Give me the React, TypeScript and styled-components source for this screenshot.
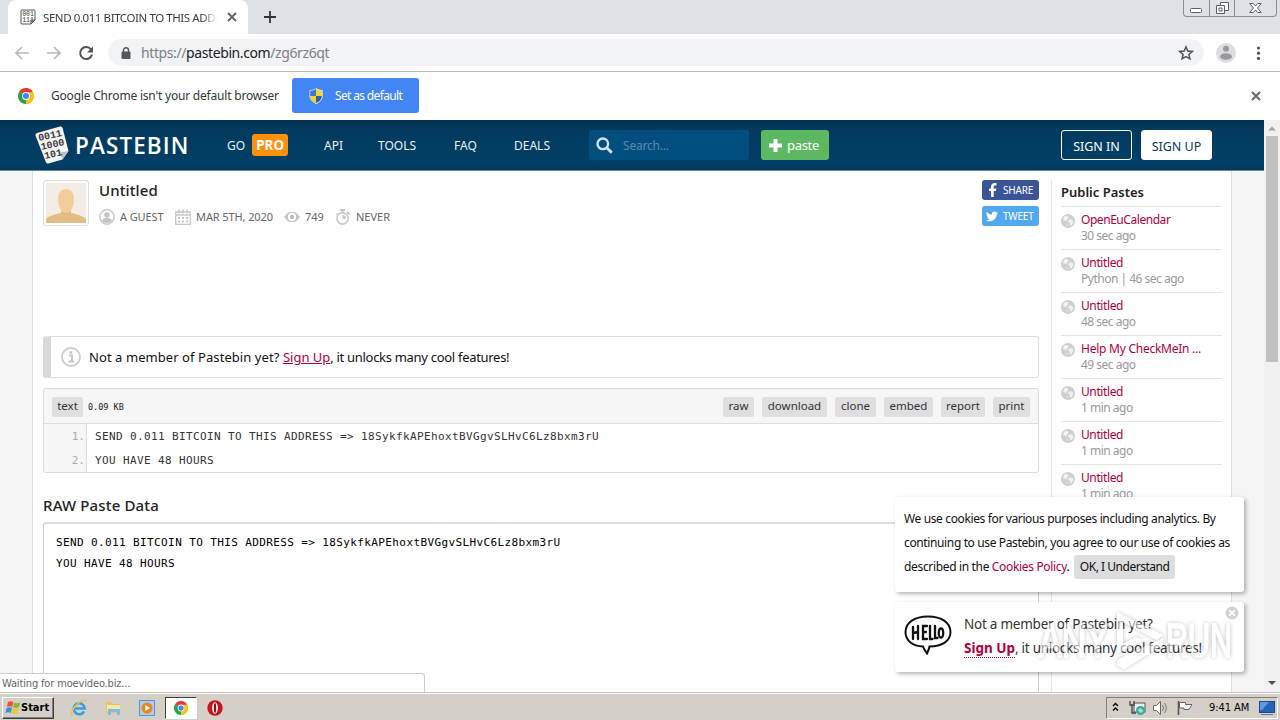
import React from "react";
import styled, { createGlobalStyle } from "styled-components";

const GlobalStyle = createGlobalStyle`
  * {
    box-sizing: border-box;
  }

  body {
    margin: 0;
    overflow: hidden;
    font-family: "Noto Sans", "Open Sans", sans-serif;
    font-size: 12px;
    color: #222;
  }
`;

const Screen = styled.div`
  position: relative;
  display: flex;
  flex-direction: column;
  width: 1280px;
  height: 720px;
  overflow: hidden;
  background-color: #fff;
`;

const Text = styled.span<{ $ls?: number }>`
  white-space: pre;
  letter-spacing: ${({ $ls }) => $ls ?? 0}px;
`;

/* Browser chrome */

const TabStrip = styled.div`
  display: flex;
  align-items: flex-start;
  height: 34px;
  padding-left: 8px;
  background-color: #dee1e6;
`;

const Tab = styled.div`
  display: flex;
  align-items: center;
  width: 240px;
  height: 34px;
  padding: 0 10px 0 12px;
  border-radius: 8px 8px 0 0;
  background-color: #fff;

  & svg {
    flex: none;
  }
`;

const TabTitle = styled.div`
  width: 174px;
  margin: 0 10px 0 7px;
  overflow: hidden;
  font-size: 11.5px;
  color: #3c4043;
  mask-image: linear-gradient(to right, #000 92%, transparent);
`;

const NewTab = styled.div`
  margin: 10px 0 0 15px;
  height: 14px;

  & svg {
    display: block;
  }
`;

const WindowButtons = styled.div`
  display: flex;
  height: 17px;
  margin: 0 3px 0 auto;
  border: 1px solid #8b8e99;
  border-top: none;
  border-radius: 0 0 4px 4px;

  & div {
    display: flex;
    justify-content: center;
    width: 25px;
  }

  & div + div {
    border-left: 1px solid #8b8e99;
  }

  & div:last-child {
    width: 42px;
  }
`;

const Toolbar = styled.div`
  display: flex;
  align-items: center;
  height: 38px;
  padding: 0 13px;
  border-bottom: 1px solid #b9bbbd;

  & > svg {
    flex: none;
  }
`;

const AddressBar = styled.div`
  display: flex;
  align-items: center;
  width: 1096px;
  height: 27px;
  margin: 0 1px 0 12px;
  padding: 0 10px 0 13px;
  border-radius: 14px;
  background-color: #f1f3f4;

  & .url {
    margin: -1px auto 0 10px;
    font-size: 14px;
    color: #7d8185;
  }

  & b {
    font-weight: normal;
    color: #202124;
  }
`;

const InfoBar = styled.div`
  display: flex;
  align-items: center;
  height: 48px;
  padding: 0 19px 0 18px;
  color: #333639;

  & .message {
    width: 229px;
    margin: -2px 0 0 17px;
  }
`;

const DefaultButton = styled.div`
  display: flex;
  align-items: center;
  width: 127px;
  height: 35px;
  margin: -1px auto 0 12px;
  padding-left: 17px;
  gap: 12px;
  border-radius: 3px;
  background-color: #4285f4;
  color: #fff;
`;

/* Page */

const Viewport = styled.div`
  display: flex;
  height: 572px;
  overflow: hidden;
`;

const Page = styled.div`
  width: 1264px;
  background-color: #f5f5f5;
`;

const Header = styled.header`
  display: flex;
  align-items: center;
  height: 51px;
  padding: 0 0 0 34px;
  border-bottom: 1px solid #6088a5;
  background: linear-gradient(#02304f, #033a5e 15%, #023f66 85%, #02395c);
  color: #e8f1f7;

  & > svg {
    flex: none;
  }
`;

const Brand = styled.div`
  width: 152px;
  margin-left: 5px;
  font-family: "Open Sans", sans-serif;
  font-size: 22.5px;
  font-weight: 600;
  color: #fff;
`;

const Nav = styled.nav`
  display: flex;
  width: 362px;
  font-size: 12px;
`;

const NavItem = styled.div<{ $width: number }>`
  display: flex;
  align-items: center;
  width: ${({ $width }) => $width}px;
`;

const ProBadge = styled.span`
  width: 36px;
  height: 22px;
  margin-left: 7px;
  border-radius: 3px;
  background-color: #ff9008;
  color: #fff;
  font-size: 13.5px;
  font-weight: bold;
  line-height: 23px;
  text-align: center;
`;

const Search = styled.div`
  display: flex;
  align-items: center;
  width: 160px;
  height: 30px;
  padding-left: 7px;
  gap: 10px;
  border-radius: 3px;
  background-color: #024f7f;
  color: #5f88a4;
`;

const PasteButton = styled.div`
  display: flex;
  align-items: center;
  width: 68px;
  height: 30px;
  margin-left: 12px;
  padding-left: 8px;
  gap: 5px;
  border-radius: 3px;
  background-color: #5cb962;
  color: #fff;
  font-size: 13px;
`;

const AuthButton = styled.div<{ $filled?: boolean }>`
  width: 71px;
  height: 30px;
  margin-right: ${({ $filled }) => ($filled ? 52 : 9)}px;
  margin-left: ${({ $filled }) => ($filled ? 0 : "auto")};
  border: 1px solid #fff;
  border-radius: 3px;
  background-color: ${({ $filled }) => ($filled ? "#fff" : "transparent")};
  color: ${({ $filled }) => ($filled ? "#023b60" : "#fff")};
  font-size: 12.5px;
  line-height: 32px;
  text-align: center;
`;

const Content = styled.div`
  display: flex;
  width: 1200px;
  height: 521px;
  margin-left: 32px;
  padding: 9px 9px 0 10px;
  border: 1px solid #dedede;
  border-width: 0 1px;
  background-color: #fff;
`;

const Main = styled.main`
  width: 996px;
  margin-right: 12px;
`;

const PasteInfo = styled.div`
  display: flex;
  height: 156px;
`;

const Avatar = styled.div`
  width: 46px;
  height: 46px;
  padding: 2px;
  border: 1px solid #ddd;
  border-radius: 3px;

  & svg {
    display: block;
  }
`;

const Details = styled.div`
  width: 870px;
  padding-left: 10px;

  & h1 {
    height: 23px;
    margin: 0 0 4px;
    font-size: 15px;
    font-weight: 500;
    line-height: 21px;
    letter-spacing: 0.1px;
  }
`;

const Meta = styled.div`
  display: flex;
  align-items: center;
  height: 20px;
  font-size: 11px;
  color: #666;

  & svg {
    flex: none;
    margin-right: 5px;
  }

  & span {
    margin-top: -2px;
  }
`;

const MetaItem = styled.div<{ $width: number }>`
  display: flex;
  align-items: center;
  width: ${({ $width }) => $width}px;
`;

const Social = styled.div`
  margin-left: auto;
`;

const SocialButton = styled.div<{ $color: string }>`
  display: flex;
  align-items: center;
  width: 57px;
  height: 20px;
  margin-bottom: 6px;
  padding-left: 4px;
  gap: 5px;
  border-radius: 3px;
  background-color: ${({ $color }) => $color};
  color: #fff;
  font-size: 10px;
`;

const Notice = styled.div`
  display: flex;
  align-items: center;
  height: 42px;
  padding-left: 10px;
  gap: 8px;
  border: 1px solid #ddd;
  border-left: 8px solid #d9d9d9;
  border-radius: 3px;
  font-size: 13px;
  color: #111;
`;

const Link = styled.span`
  color: #b00040;
`;

const CodeBox = styled.div`
  height: 85px;
  margin-top: 10px;
  border: 1px solid #dcdcdc;
  border-radius: 3px;
  overflow: hidden;
`;

const CodeBar = styled.div`
  display: flex;
  align-items: center;
  height: 35px;
  padding: 2px 8px 0;
  gap: 8px;
  border-bottom: 1px solid #dcdcdc;
  background-color: #f6f6f6;

  & .size {
    margin: 0 auto 0 -3px;
    font-family: "DejaVu Sans Mono", monospace;
    font-size: 8.5px;
  }
`;

const SmallButton = styled.span<{ $width: number }>`
  width: ${({ $width }) => $width}px;
  height: 20px;
  border-radius: 2px;
  background-color: #dfdfdf;
  color: #333;
  font-size: 11.5px;
  line-height: 18px;
  text-align: center;
  white-space: nowrap;
`;

const CodeLine = styled.div`
  display: flex;
  height: 24px;
  font-family: "DejaVu Sans Mono", monospace;
  font-size: 11px;
  line-height: 26px;
  color: #333;

  & .num {
    width: 43px;
    margin-right: 8px;
    padding-right: 1px;
    border-right: 1px solid #dcdcdc;
    background-color: #f6f6f6;
    color: #aaa;
    text-align: right;
  }
`;

const RawTitle = styled.h2`
  height: 49px;
  margin: 0;
  padding-top: 22px;
  font-size: 15px;
  font-weight: 500;
  line-height: 21px;
  letter-spacing: 0.15px;
`;

const RawBox = styled.div`
  height: 180px;
  padding: 8px 12px;
  border: 1px solid #ccc;
  border-top: 2px solid #ddd;
  border-radius: 3px;
  font-family: "DejaVu Sans Mono", monospace;
  font-size: 11px;
  line-height: 21px;
  color: #000;
`;

const Sidebar = styled.aside`
  width: 171px;
  padding-left: 9px;
  border-left: 1px solid #e4e4e4;

  & h3 {
    height: 27px;
    margin: 0;
    border-bottom: 1px solid #e3e3e3;
    font-size: 13px;
    font-weight: 600;
    line-height: 24px;
  }
`;

const PasteItem = styled.div`
  display: flex;
  width: 161px;
  height: 43px;
  padding-top: 5px;
  gap: 6px;
  border-bottom: 1px solid #e3e3e3;
  line-height: 16px;

  & svg {
    margin-top: 2px;
  }

  & .when {
    color: #999;
  }
`;

const Scrollbar = styled.div`
  display: flex;
  flex-direction: column;
  align-items: center;
  width: 16px;
  background-color: #f1f1f1;

  & .thumb {
    width: 12px;
    height: 226px;
    margin: 1px 0 auto;
    background-color: #c1c1c1;
  }
`;

/* Overlays */

const Popup = styled.div<{ $top: number; $height: number }>`
  position: absolute;
  top: ${({ $top }) => $top}px;
  left: 895px;
  display: flex;
  width: 349px;
  height: ${({ $height }) => $height}px;
  padding: 10px 9px;
  border-radius: 3px;
  background-color: #fff;
  box-shadow: 2px 2px 4px rgba(0, 0, 0, 0.3);
  line-height: 24px;
  color: #111;
`;

const OkButton = styled.span`
  display: inline-block;
  width: 101px;
  height: 24px;
  margin-left: 2px;
  border-radius: 3px;
  background-color: #ddd;
  line-height: 23px;
  text-align: center;
`;

const Hello = styled.div`
  width: 60px;
  padding-top: 3px;
`;

const NoteText = styled.div`
  font-size: 13.5px;
  color: #333;

  & .signup {
    border-bottom: 1px dotted #b00040;
    font-weight: bold;
  }
`;

const Close = styled.div`
  position: absolute;
  top: 4px;
  right: 5px;
  height: 14px;

  & svg {
    display: block;
  }
`;

const Watermark = styled.svg`
  position: absolute;
  top: 602px;
  left: 1030px;
`;

const StatusBubble = styled.div`
  position: absolute;
  top: 673px;
  left: 0;
  width: 425px;
  height: 19px;
  padding-left: 2px;
  border: 1px solid #ccc;
  border-width: 1px 1px 0 0;
  border-radius: 0 4px 0 0;
  background-color: #fff;
  font-family: "DejaVu Sans Condensed", "DejaVu Sans", sans-serif;
  font-size: 11px;
  line-height: 19px;
  color: #666;
`;

/* Taskbar */

const Taskbar = styled.footer`
  display: flex;
  align-items: center;
  height: 28px;
  border-top: 1px solid #c6c2ba;
  box-shadow: inset 0 1px 0 #fff;
  background-color: #d4d0c8;
  font-family: "DejaVu Sans Condensed", "DejaVu Sans", sans-serif;
  font-size: 11px;
  color: #000;
`;

const StartButton = styled.div`
  display: flex;
  align-items: center;
  width: 52px;
  height: 22px;
  margin: 2px 14px 0 2px;
  padding-left: 2px;
  border: 1px solid;
  border-color: #fff #404040 #404040 #fff;
  box-shadow: inset -1px -1px 0 #808080;
  font-weight: bold;

  & svg {
    flex: none;
  }
`;

const TaskItem = styled.div<{ $active?: boolean }>`
  display: flex;
  align-items: center;
  justify-content: center;
  width: ${({ $active }) => ($active ? 32 : 22)}px;
  height: 22px;
  margin: 2px ${({ $active }) => ($active ? 7 : 12)}px 0 0;
  border: ${({ $active }) => ($active ? "1px solid" : "none")};
  border-color: #404040 #fff #fff #404040;
  background-color: ${({ $active }) => ($active ? "#fff" : "transparent")};

  &:nth-child(4) {
    margin-right: 7px;
  }
`;

const Tray = styled.div`
  display: flex;
  align-items: center;
  width: 172px;
  height: 22px;
  margin: 2px 2px 0 auto;
  padding-left: 5px;
  border: 1px solid;
  border-color: #808080 #fff #fff #808080;

  & svg {
    flex: none;
  }

  & .clock {
    margin: 0 10px 0 17px;
  }
`;

const CloseIcon = ({ color = "#5f6368", size = 10 }) => (
  <svg width={size} height={size} viewBox="0 0 10 10">
    <path d="M1 1l8 8M9 1L1 9" stroke={color} strokeWidth="1.9" />
  </svg>
);

const ChromeIcon = ({ size = 16 }) => (
  <svg width={size} height={size} viewBox="0 0 16 16">
    <path d="M8 8L1.07 4A8 8 0 0 1 14.93 4z" fill="#dd3b2e" />
    <path d="M8 8l6.93-4A8 8 0 0 1 8 16l-1-1z" fill="#fbc116" />
    <path d="M8 8l0 8A8 8 0 0 1 1.07 4z" fill="#27a34a" />
    <path d="M8 4.2h7A8 8 0 0 1 8 16l3.4-6z" fill="#fbc116" />
    <circle cx="8" cy="8" r="3.9" fill="#fff" />
    <circle cx="8" cy="8" r="3" fill="#4285f4" />
  </svg>
);

const ShieldIcon = () => (
  <svg width="14" height="16" viewBox="0 0 14 16">
    <path d="M7 0C5 1.5 3 2 .5 2v6c0 4 3 6.5 6.5 8z" fill="#3c78c8" />
    <path d="M7 0c2 1.5 4 2 6.5 2v6c0 4-3 6.5-6.5 8z" fill="#f6d32d" />
    <path d="M.8 8H7v7.3C3.8 14 1.2 11.5.8 8z" fill="#f6d32d" />
    <path d="M13.2 8H7v7.3c3.2-1.3 5.8-3.8 6.2-7.3z" fill="#2c62b5" />
    <path
      d="M7 .6C5 2 3 2.4.8 2.4v5.8c0 3.5 2.7 6 6.2 7.3 3.5-1.3 6.2-3.8 6.2-7.3V2.4C11 2.4 9 2 7 .6z"
      fill="none"
      stroke="#dfe6ee"
      strokeWidth=".8"
    />
  </svg>
);

const FaviconIcon = () => (
  <svg width="16" height="16" viewBox="0 0 16 16">
    <path
      d="M2 1h12q1 0 1 1v9l-4 4H2q-1 0-1-1V2q0-1 1-1z"
      fill="#fff"
      stroke="#555"
    />
    <path d="M11 15v-4h4" fill="none" stroke="#555" />
    <g fontFamily="Liberation Mono, monospace" fontSize="6.5" fill="#333">
      <text x="2.2" y="7.2">001</text>
      <text x="2.2" y="13.2">111</text>
    </g>
  </svg>
);

const LogoIcon = () => (
  <svg width="36" height="42" viewBox="0 0 36 42">
    <path
      d="M3 9L26 2.500q2-.5 2.600 1.500L34.500 27l-6 8.500-14 4q-2 .4-2.700-1.500L1.500 11.500q-.4-2 1.500-2.500z"
      fill="#f4f4f4"
    />
    <path d="M34.500 27l-8.300 1.500 2.300 7z" fill="#b9c1c7" />
    <g
      fontFamily="Liberation Mono, monospace"
      fontSize="10"
      fontWeight="bold"
      fill="#3c3c3c"
    >
      <text transform="translate(5 17) rotate(-12)">0011</text>
      <text transform="translate(7.500 26) rotate(-12)">1000</text>
      <text transform="translate(11 35) rotate(-12)">101</text>
    </g>
  </svg>
);

const GlobeIcon = () => (
  <svg width="14" height="14" viewBox="0 0 14 14">
    <circle cx="7" cy="7" r="7" fill="#cfcfcf" />
    <path d="M3 2.500l3.500-.500 1 2-1.500 1.500-1 2-2-1.500-1 .5z" fill="#f4f4f4" />
    <path d="M9 5l2.500 1 1 2-2 3.500-1.500-.5-.5-2.500-2-1z" fill="#f0f0f0" />
    <path d="M5 9.500l2 1-.5 2z" fill="#e8e8e8" />
  </svg>
);

const AvatarIcon = () => (
  <svg width="40" height="40" viewBox="0 0 40 40">
    <rect width="40" height="40" fill="#f4ede6" />
    <path
      d="M12 16c0-6 3-10 8-10s8 4 8 10c0 4-1 8-3 11v5H15v-5c-2-3-3-7-3-11z"
      fill="#f2cd98"
    />
    <path d="M15 28c3 3 7 3 10 0v4H15z" fill="#e2b67c" />
    <path d="M0 40v-4c2-3 9-4.500 14-6 3 2 9 2 12 0 5 1.500 12 3 14 6v4z" fill="#e5bd87" />
  </svg>
);

const GuestIcon = () => (
  <svg width="16" height="16" viewBox="0 0 16 16">
    <circle cx="8" cy="8" r="7.200" fill="none" stroke="#c9c9c9" strokeWidth="1.500" />
    <circle cx="8" cy="6" r="2.700" fill="#c2c2c2" />
    <path d="M3 12c.5-2.500 3-3 5-3s4.500.5 5 3a7 7 0 0 1-10 0z" fill="#c2c2c2" />
  </svg>
);

const CalendarIcon = () => (
  <svg width="16" height="16" viewBox="0 0 16 16" fill="none" stroke="#c8c8c8">
    <path d="M.7 3h14.600v12.300H.7zM.7 6h14.600" strokeWidth="1.300" />
    <path d="M4 .5v4M8 .5v4M12 .5v4" strokeWidth="1.600" />
    <path d="M3 9h2M7 9h2M11 9h2M3 12.500h2M7 12.500h2M11 12.500h2" strokeWidth="2" />
  </svg>
);

const EyeIcon = () => (
  <svg width="16" height="16" viewBox="0 0 16 16">
    <path d="M0 8c4-7 12-7 16 0-4 7-12 7-16 0z" fill="#c6c6c6" />
    <circle cx="8" cy="8" r="4" fill="#fff" />
    <circle cx="8" cy="8" r="2.200" fill="#bdbdbd" />
  </svg>
);

const TimerIcon = () => (
  <svg width="16" height="16" viewBox="0 0 16 16" fill="none" stroke="#c8c8c8">
    <circle cx="7.500" cy="9.500" r="5.600" strokeWidth="1.600" />
    <path d="M5 1h5M7.500 1v3M12 3l2.500 2.500" strokeWidth="1.800" />
    <path d="M7.500 9.500V6a3.500 3.500 0 0 1 3.500 3.500z" fill="#c4c4c4" stroke="none" />
    <path d="M1.500 4.500l1 1" strokeWidth="1.400" />
  </svg>
);

const pastes = [
  { title: "OpenEuCalendar", when: "30 sec ago", ls: -0.45 },
  { title: "Untitled", when: "Python | 46 sec ago" },
  { title: "Untitled", when: "48 sec ago" },
  { title: "Help My CheckMeIn ...", when: "49 sec ago", ls: -0.25 },
  { title: "Untitled", when: "1 min ago" },
  { title: "Untitled", when: "1 min ago" },
  { title: "Untitled", when: "1 min ago" },
];

const actions = [
  { label: "raw", width: 31 },
  { label: "download", width: 65 },
  { label: "clone", width: 41 },
  { label: "embed", width: 49 },
  { label: "report", width: 44 },
  { label: "print", width: 37 },
];

const firstLine =
  "SEND 0.011 BITCOIN TO THIS ADDRESS => 18SykfkAPEhoxtBVGgvSLHvC6Lz8bxm3rU";
const secondLine = "YOU HAVE 48 HOURS";

const BrowserChrome = () => (
  <>
    <TabStrip>
      <Tab>
        <FaviconIcon />
        <TabTitle>
          <Text $ls={-0.42}>SEND 0.011 BITCOIN TO THIS ADDR</Text>
        </TabTitle>
        <CloseIcon />
      </Tab>
      <NewTab>
        <svg width="14" height="14" viewBox="0 0 14 14">
          <path d="M7 1v12M1 7h12" stroke="#303338" strokeWidth="1.800" />
        </svg>
      </NewTab>
      <WindowButtons>
        <div>
          <svg width="13" height="16" viewBox="0 0 13 16">
            <rect x=".5" y="8.500" width="11" height="4" rx="1" fill="#fff" stroke="#5a5d66" />
          </svg>
        </div>
        <div>
          <svg width="13" height="16" viewBox="0 0 13 16" fill="#fff" stroke="#5a5d66">
            <path d="M4.500 2.500h8v8h-8z" />
            <path d="M.5 5.500h8v8h-8zM3 8h3v3H3z" />
          </svg>
        </div>
        <div>
          <svg width="13" height="16" viewBox="0 0 13 16">
            <path
              d="M.8 3.500h3.400l2.300 2.600 2.300-2.600h3.400L8.500 8l3.700 4.500H8.800L6.500 9.900l-2.300 2.600H.8L4.500 8z"
              fill="#fff"
              stroke="#5a5d66"
            />
          </svg>
        </div>
      </WindowButtons>
    </TabStrip>
    <Toolbar>
      <svg width="83" height="18" viewBox="0 0 83 18" fill="none" strokeWidth="1.700">
        <path d="M16 9H3M9 3L3 9l6 6" stroke="#b5b7ba" />
        <path d="M34 9h13M41 3l6 6-6 6" stroke="#b5b7ba" />
        <path d="M78 5.500A6 6 0 1 0 79 10.500" stroke="#505357" strokeWidth="2" />
        <path d="M80 2.500v6h-6z" fill="#505357" />
      </svg>
      <AddressBar>
        <svg width="10" height="12" viewBox="0 0 10 12">
          <path d="M2.500 5V3.300a2.500 2.500 0 0 1 5 0V5" fill="none" stroke="#55585c" strokeWidth="1.400" />
          <rect x="0.500" y="4.500" width="9" height="7.500" rx="1" fill="#55585c" />
        </svg>
        <Text className="url" $ls={-0.4}>
          https://<b>pastebin.com</b>/zg6rz6qt
        </Text>
        <svg width="16" height="16" viewBox="0 0 16 16">
          <path
            d="M8 1.800l1.800 4.200 4.500.4-3.400 3 1 4.400L8 11.500l-3.900 2.300 1-4.400-3.400-3 4.500-.4z"
            fill="none"
            stroke="#505357"
            strokeWidth="1.500"
          />
        </svg>
      </AddressBar>
      <svg width="62" height="20" viewBox="0 0 62 20">
        <circle cx="21" cy="10" r="10" fill="#dcdddf" />
        <circle cx="21" cy="5.800" r="3" fill="#97999c" />
        <ellipse cx="21" cy="13.500" rx="6" ry="3.200" fill="#97999c" />
        <circle cx="53.500" cy="5" r="1.600" fill="#505357" />
        <circle cx="53.500" cy="10.200" r="1.600" fill="#505357" />
        <circle cx="53.500" cy="15.400" r="1.600" fill="#505357" />
      </svg>
    </Toolbar>
    <InfoBar>
      <ChromeIcon />
      <Text $ls={-0.2} className="message">
        Google Chrome isn't your default browser
      </Text>
      <DefaultButton>
        <ShieldIcon />
        <Text $ls={-0.65}>Set as default</Text>
      </DefaultButton>
      <CloseIcon />
    </InfoBar>
  </>
);

const SiteHeader = () => (
  <Header>
    <LogoIcon />
    <Brand>
      <Text $ls={1.1}>PASTEBIN</Text>
    </Brand>
    <Nav>
      <NavItem $width={97}>
        <Text>GO</Text>
        <ProBadge>PRO</ProBadge>
      </NavItem>
      <NavItem $width={54}>API</NavItem>
      <NavItem $width={76}>TOOLS</NavItem>
      <NavItem $width={60}>FAQ</NavItem>
      <NavItem $width={75}>DEALS</NavItem>
    </Nav>
    <Search>
      <svg width="17" height="17" viewBox="0 0 17 17" fill="none" stroke="#d5e0e8">
        <circle cx="6.800" cy="6.800" r="5.300" strokeWidth="2.400" />
        <path d="M10.800 10.800l5 5" strokeWidth="3" />
      </svg>
      <Text $ls={-0.2}>Search...</Text>
    </Search>
    <PasteButton>
      <svg width="13" height="13" viewBox="0 0 13 13">
        <path d="M6.500 0v13M0 6.500h13" stroke="#fff" strokeWidth="4" />
      </svg>
      <Text $ls={-0.3}>paste</Text>
    </PasteButton>
    <AuthButton>SIGN IN</AuthButton>
    <AuthButton $filled>SIGN UP</AuthButton>
  </Header>
);

const SitePage = () => (
  <Page>
    <SiteHeader />
    <Content>
      <Main>
        <PasteInfo>
          <Avatar>
            <AvatarIcon />
          </Avatar>
          <Details>
            <h1>Untitled</h1>
            <Meta>
              <MetaItem $width={76}>
                <GuestIcon />
                <Text $ls={-0.1}>A GUEST</Text>
              </MetaItem>
              <MetaItem $width={109}>
                <CalendarIcon />
                <Text $ls={-0.1}>MAR 5TH, 2020</Text>
              </MetaItem>
              <MetaItem $width={51}>
                <EyeIcon />
                <Text $ls={-0.1}>749</Text>
              </MetaItem>
              <MetaItem $width={60}>
                <TimerIcon />
                <Text>NEVER</Text>
              </MetaItem>
            </Meta>
          </Details>
          <Social>
            <SocialButton $color="#3b5499">
              <svg width="12" height="14" viewBox="0 0 12 14">
                <path
                  d="M5 14V8H3V5.500h2V4c0-2.500 1.300-4 4-4h1.500v2.500H9c-1 0-1.300.5-1.300 1.500v1.500h2.700L10 8H7.700v6z"
                  fill="#fff"
                />
              </svg>
              <Text $ls={-0.2}>SHARE</Text>
            </SocialButton>
            <SocialButton $color="#50a8ee">
              <svg width="12" height="11" viewBox="0 0 24 20">
                <path
                  d="M24 2.400c-.9.400-1.800.7-2.800.8 1-.6 1.800-1.600 2.200-2.700-1 .6-2 1-3.100 1.200A4.900 4.900 0 0 0 11.900 6.200C7.800 6 4.200 4 1.700.9A4.900 4.900 0 0 0 3.200 7.500C2.400 7.500 1.600 7.200 1 6.900c0 2.300 1.600 4.400 3.900 4.900-.7.200-1.500.2-2.200.1.600 2 2.400 3.400 4.600 3.400A9.900 9.900 0 0 1 0 17.300 14 14 0 0 0 21.500 4.800c1-.7 1.800-1.500 2.500-2.400z"
                  fill="#fff"
                />
              </svg>
              <Text $ls={-0.2}>TWEET</Text>
            </SocialButton>
          </Social>
        </PasteInfo>
        <Notice>
          <svg width="20" height="20" viewBox="0 0 20 20">
            <circle cx="10" cy="10" r="9" fill="none" stroke="#ccc" strokeWidth="1.800" />
            <path d="M8 8.500h3V14M7.500 14.500h5.500" fill="none" stroke="#c4c4c4" strokeWidth="1.800" />
            <circle cx="10" cy="5.500" r="1.400" fill="#c4c4c4" />
          </svg>
          <div>
            <Text $ls={0.07}>Not a member of Pastebin yet? </Text>
            <Link>
              <u>Sign Up</u>
            </Link>
            <Text $ls={-0.3}>, it unlocks many cool features!</Text>
          </div>
        </Notice>
        <CodeBox>
          <CodeBar>
            <SmallButton $width={31}>text</SmallButton>
            <Text className="size">0.09 KB</Text>
            {actions.map(({ label, width }) => (
              <SmallButton key={label} $width={width}>
                {label}
              </SmallButton>
            ))}
          </CodeBar>
          <CodeLine>
            <span className="num">1.</span>
            <Text $ls={0.378}>{firstLine}</Text>
          </CodeLine>
          <CodeLine>
            <span className="num">2.</span>
            <Text $ls={0.378}>{secondLine}</Text>
          </CodeLine>
        </CodeBox>
        <RawTitle>RAW Paste Data</RawTitle>
        <RawBox>
          <Text $ls={0.385}>{`${firstLine}\n${secondLine}`}</Text>
        </RawBox>
      </Main>
      <Sidebar>
        <h3>Public Pastes</h3>
        {pastes.map(({ title, when, ls = -0.4 }, index) => (
          <PasteItem key={index}>
            <GlobeIcon />
            <div>
              <Link>
                <Text $ls={ls}>{title}</Text>
              </Link>
              <div className="when">
                <Text $ls={-0.5}>{when}</Text>
              </div>
            </div>
          </PasteItem>
        ))}
      </Sidebar>
    </Content>
  </Page>
);

const Popups = () => (
  <>
    <Popup $top={497} $height={95}>
      <div>
        <Text $ls={-0.37}>We use cookies for various purposes including analytics. By</Text>
        <br />
        <Text $ls={-0.37}>continuing to use Pastebin, you agree to our use of cookies as</Text>
        <br />
        <Text $ls={-0.34}>
          described in the <Link>Cookies Policy</Link>.{" "}
        </Text>
        <OkButton>
          <Text $ls={-0.48}>OK, I Understand</Text>
        </OkButton>
      </div>
    </Popup>
    <Popup $top={602} $height={70}>
      <Hello>
        <svg width="48" height="40" viewBox="0 0 48 40">
          <path
            d="M24 1.500C10 1.500 1.500 8 1.500 17S9 31 19 31.500c1 3 2.500 5 4 7 1-2 2-4 2.500-7C38 31.500 46.500 26 46.500 17S38 1.500 24 1.500z"
            fill="#fff"
            stroke="#111"
            strokeWidth="2"
          />
          <g fill="none" stroke="#111" strokeWidth="2.300" strokeLinecap="round">
            <path d="M9 12v12M14 11v13M9 18l5-1" />
            <path d="M23 11h-4v13h4M19 17h3" />
            <path d="M26 11v13h2.500M31 11v12h2.500" />
            <ellipse cx="37" cy="18" rx="2.200" ry="4.500" />
          </g>
        </svg>
      </Hello>
      <NoteText>
        <Text $ls={-0.24}>Not a member of Pastebin yet?</Text>
        <br />
        <Link className="signup">Sign Up</Link>
        <Text $ls={-0.28}>, it unlocks many cool features!</Text>
      </NoteText>
      <Close>
        <svg width="14" height="14" viewBox="0 0 14 14">
          <circle cx="7" cy="7" r="6.500" fill="#d2d2d2" />
          <path d="M4.300 4.300l5.400 5.400M9.700 4.300L4.300 9.700" stroke="#fff" strokeWidth="1.800" />
        </svg>
      </Close>
    </Popup>
    <Watermark width="210" height="76" viewBox="0 0 210 76">
      <defs>
        <filter id="soft" x="-10%" y="-20%" width="120%" height="140%">
          <feDropShadow dx="0" dy="0" stdDeviation="2.200" floodColor="#000" floodOpacity=".5" />
        </filter>
      </defs>
      <g filter="url(#soft)" opacity=".52">
        <g
          fill="#fff"
          stroke="#fff"
          strokeWidth="1.500"
          fontFamily="Liberation Sans, sans-serif"
          fontSize="48"
        >
          <text x="9" y="55" textLength="70" lengthAdjust="spacingAndGlyphs">ANY</text>
          <text x="136" y="55" textLength="66" lengthAdjust="spacingAndGlyphs">RUN</text>
        </g>
        <path
          d="M87 10l46 23-6 5-34-18v22l12-7 8 3-26 14zM87 58l46-22v7L94 67l-7-4z"
          fill="#fff"
        />
      </g>
    </Watermark>
    <StatusBubble>
      <Text $ls={-0.15}>Waiting for moevideo.biz...</Text>
    </StatusBubble>
  </>
);

const DesktopTaskbar = () => (
  <Taskbar>
    <StartButton>
      <svg width="16" height="16" viewBox="0 0 16 16">
        <path d="M3 2c2-1.300 4-1 5.500 0L7.200 7C5.500 6 3.800 6 2 7z" fill="#e5552d" />
        <path d="M9.300 2.500c2 1 4 1 6-.3L14 7c-2 1.300-4 1.300-6 .3z" fill="#7fba3c" />
        <path d="M1.700 8c2-1.200 3.700-1 5.300 0l-1.300 5c-1.700-1.200-3.500-1-5.400 0z" fill="#3b8fd6" />
        <path d="M7.800 8.300c2 1 4 1 6-.3l-1.500 5c-2 1.300-4 1.200-5.800.3z" fill="#f5c32c" />
      </svg>
      <Text>Start</Text>
    </StartButton>
    <TaskItem>
      <svg width="18" height="18" viewBox="0 0 18 18" fill="none">
        <path d="M14 12.500A5.500 5.500 0 1 1 14.700 9.500H5" stroke="#39a0e0" strokeWidth="2.600" />
        <path d="M2 16.500C-1 13 10-1 16.500 1.800" stroke="#eec445" strokeWidth="1.400" />
      </svg>
    </TaskItem>
    <TaskItem>
      <svg width="17" height="16" viewBox="0 0 17 16">
        <path d="M1 2h6l1 2h7v9H1z" fill="#e9c65e" />
        <path d="M2 5h13v6H2z" fill="#f8e8a6" />
        <path d="M3 15V9h12v6h-3v-3H6v3z" fill="#7dbce6" />
      </svg>
    </TaskItem>
    <TaskItem>
      <svg width="16" height="16" viewBox="0 0 16 16">
        <rect x=".5" y=".5" width="15" height="15" fill="#a8cef0" stroke="#5b94cc" />
        <circle cx="8" cy="8" r="5.500" fill="#f08418" />
        <path d="M6.300 5v6l4.700-3z" fill="#fff" />
      </svg>
    </TaskItem>
    <TaskItem $active>
      <ChromeIcon size={14} />
    </TaskItem>
    <TaskItem>
      <svg width="16" height="16" viewBox="0 0 16 16">
        <circle cx="8" cy="8" r="7.700" fill="#c4161c" />
        <ellipse cx="8" cy="8" rx="2.900" ry="5.700" fill="#fff" />
        <ellipse cx="8" cy="8" rx="1.200" ry="5" fill="#8d1014" />
      </svg>
    </TaskItem>
    <Tray>
      <svg width="80" height="18" viewBox="0 0 80 18" fill="none">
        <path d="M1 7l2.500-2.500L6 7M1 11.500L3.500 9 6 11.500" stroke="#000" strokeWidth="1.400" />
        <rect x="22" y="4" width="11" height="9" fill="#e9eef2" stroke="#555" />
        <path d="M18 2v4h4V2M20 6v8h4" stroke="#444" strokeWidth="1.300" />
        <circle cx="28.500" cy="11.500" r="4.500" fill="#39a99b" />
        <path d="M25.500 11l3-2 3 3-3 2z" fill="#a5ddd4" />
        <path d="M41.500 6.500h3l4-4v13l-4-4h-3z" fill="#fff" stroke="#666" />
        <path d="M50.500 6q2 3 0 6M52.500 4q3.500 5 0 10" stroke="#777" />
        <path d="M66.500 2v14" stroke="#555" strokeWidth="1.600" />
        <path d="M67.500 3.500h6v2h6.500l-3 5h-5v-1.500h-4.500z" fill="#fff" stroke="#666" />
      </svg>
      <Text className="clock" $ls={-0.05}>
        9:41 AM
      </Text>
      <svg width="16" height="14" viewBox="0 0 16 14">
        <rect x=".5" y=".5" width="15" height="11" fill="#2465b8" stroke="#244a7c" />
        <path d="M1 1h9L3 9H1z" fill="#5d9be0" />
        <path d="M2 13.500h12" stroke="#5b7ba5" />
      </svg>
    </Tray>
  </Taskbar>
);

export default function App() {
  return (
    <Screen>
      <GlobalStyle />
      <BrowserChrome />
      <Viewport>
        <SitePage />
        <Scrollbar>
          <svg width="16" height="15" viewBox="0 0 16 15">
            <path d="M4 10.500h8l-4-4z" fill="#a3a3a3" />
          </svg>
          <div className="thumb" />
          <svg width="16" height="17" viewBox="0 0 16 17">
            <path d="M4 6h8l-4 4z" fill="#505050" />
          </svg>
        </Scrollbar>
      </Viewport>
      <Popups />
      <DesktopTaskbar />
    </Screen>
  );
}
